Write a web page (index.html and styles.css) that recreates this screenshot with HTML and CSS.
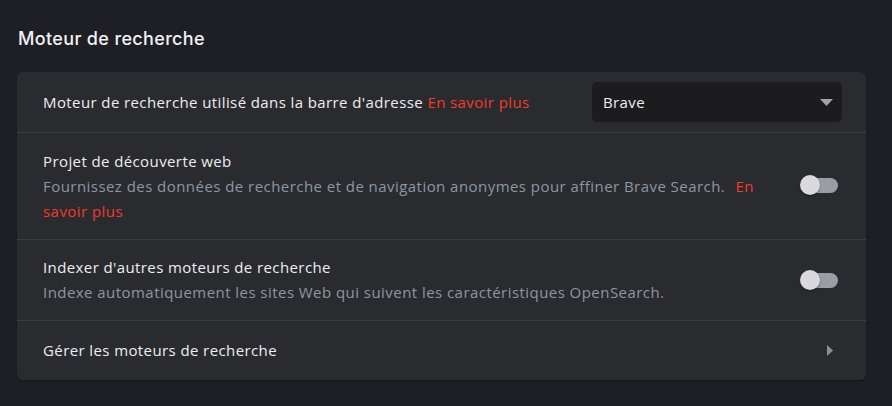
FILE: index.html
```html
<!DOCTYPE html>
<html lang="fr">
<head>
<meta charset="utf-8">
<link rel="stylesheet" href="styles.css">
</head>
<body>
<div class="page">
  <h2 class="section-title">Moteur de recherche</h2>
  <div class="card">
    <div class="row row-select">
      <div class="label">Moteur de recherche utilisé dans la barre d'adresse <a class="link">En savoir plus</a></div>
      <div class="select">
        <span>Brave</span>
        <svg class="caret" width="13" height="7" viewBox="0 0 13 7"><path d="M0 0h13L6.5 7z" fill="#a3a4aa"/></svg>
      </div>
    </div>
    <div class="row row-toggle tall">
      <div class="text">
        <div class="label">Projet de découverte web</div>
        <div class="desc">Fournissez des données de recherche et de navigation anonymes pour affiner Brave Search. <a class="link gap">En savoir plus</a></div>
      </div>
      <div class="toggle"><span class="knob"></span></div>
    </div>
    <div class="row row-toggle">
      <div class="text">
        <div class="label">Indexer d'autres moteurs de recherche</div>
        <div class="desc">Indexe automatiquement les sites Web qui suivent les caractéristiques OpenSearch.</div>
      </div>
      <div class="toggle"><span class="knob"></span></div>
    </div>
    <div class="row row-link">
      <div class="label">Gérer les moteurs de recherche</div>
      <svg class="arrow" width="6" height="11" viewBox="0 0 6 11"><path d="M0 0l6 5.5L0 11z" fill="#8d8e94"/></svg>
    </div>
  </div>
</div>
</body>
</html>
```
FILE: styles.css
```css
html, body {
  margin: 0;
  padding: 0;
  background: #1e1f25;
}
body {
  font-family: "Open Sans", "Noto Sans", sans-serif;
  color: #eeeef0;
}
.page {
  padding: 26px 26px 26px 17px;
}
.section-title {
  margin: 0 0 20px 1px;
  font-family: "Inter", "Lato", sans-serif;
  font-weight: 500;
  font-size: 18px;
  letter-spacing: 0.35px;
  line-height: 26px;
  color: #f2f2f4;
}
.card {
  width: 849px;
  background: #2a2b2f;
  border-radius: 6px;
  box-shadow: 0 1px 2px rgba(0,0,0,0.35);
}
.row {
  display: flex;
  align-items: center;
  padding: 0 24px 0 26px;
  border-top: 1px solid #3b3c41;
}
.row:first-child { border-top: none; }
.row-select { height: 60px; }
.row-toggle { height: 81px; box-sizing: border-box; }
.row-toggle.tall { height: 107px; align-items: flex-start; padding-top: 16px; }
.row-link { height: 59px; justify-content: space-between; padding-right: 33px; }
.label {
  font-size: 15px;
  line-height: 25px;
  letter-spacing: 0.4px;
  color: #eeeef0;
}
.row-select .label { flex: 1; }
.link {
  color: #f33b2b;
  cursor: pointer;
}
.link.gap { margin-left: 6px; }
.text { flex: 1; padding-right: 38px; }
.desc {
  font-size: 15px;
  line-height: 25px;
  letter-spacing: 0.45px;
  color: #8c97a2;
}
.select {
  width: 250px;
  height: 40px;
  box-sizing: border-box;
  background: #1c1c1f;
  border-radius: 5px;
  display: flex;
  align-items: center;
  justify-content: space-between;
  padding: 0 9px 0 11px;
  font-size: 15px;
  letter-spacing: 0.4px;
  color: #eeeef0;
}
.toggle {
  position: relative;
  width: 38px;
  height: 20px;
  flex: none;
  margin-right: 4px;
}
.row-toggle.tall .toggle { margin-top: 26px; }
.toggle::before {
  content: "";
  position: absolute;
  left: 8px;
  right: 0;
  top: 3px;
  height: 15px;
  border-radius: 8px;
  background: #9b9da4;
}
.knob {
  position: absolute;
  left: 0;
  top: 0;
  width: 20px;
  height: 20px;
  border-radius: 50%;
  background: #dadade;
  box-shadow: 0 1px 2px rgba(0,0,0,0.4);
}
```
